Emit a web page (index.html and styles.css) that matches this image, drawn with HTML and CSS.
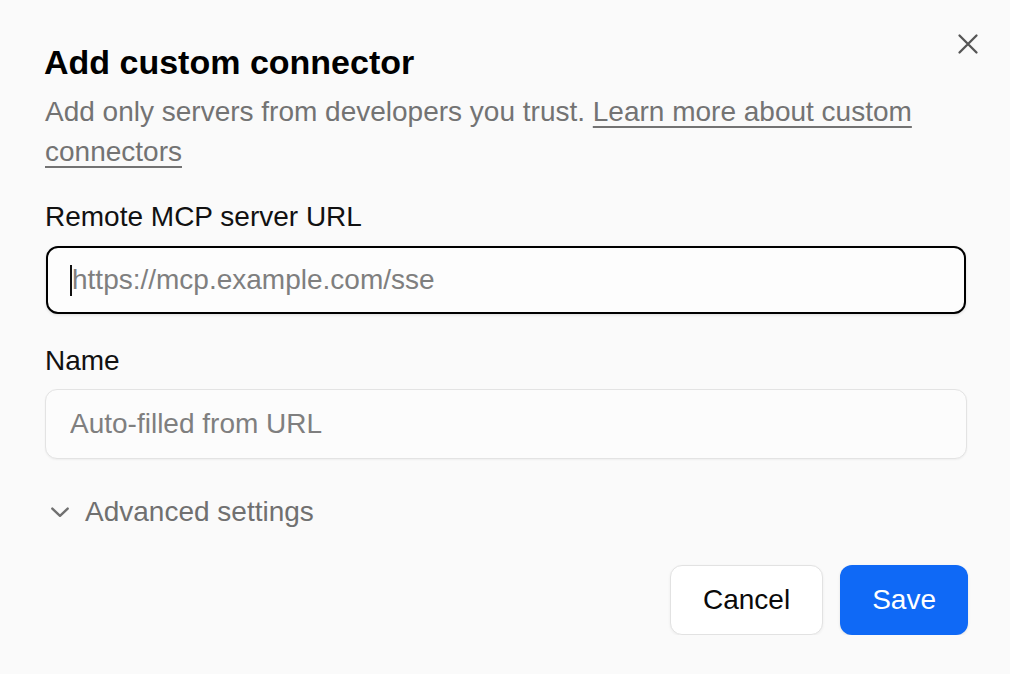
FILE: index.html
```html
<!DOCTYPE html>
<html lang="en">
<head>
<meta charset="utf-8">
<title>Add custom connector</title>
<link rel="stylesheet" href="styles.css">
</head>
<body>
<div class="dialog">
  <button class="close" aria-label="Close">
    <svg width="24" height="24" viewBox="0 0 24 24" fill="none" stroke="#555" stroke-width="2.3" stroke-linecap="round"><path d="M3.5 3.5 L20.5 20.5 M20.5 3.5 L3.5 20.5"/></svg>
  </button>
  <h1 class="title">Add custom connector</h1>
  <p class="subtitle">Add only servers from developers you trust. <a href="#" class="link">Learn more about custom connectors</a></p>

  <label class="label">Remote MCP server URL</label>
  <div class="field">
    <input class="input input-focus" type="text" placeholder="https://mcp.example.com/sse">
    <span class="caret"></span>
  </div>

  <label class="label label-name">Name</label>
  <div class="field">
    <input class="input" type="text" placeholder="Auto-filled from URL">
  </div>

  <div class="advanced">
    <svg width="24" height="24" viewBox="0 0 24 24" fill="none" stroke="#707070" stroke-width="2.4" stroke-linecap="round" stroke-linejoin="round"><path d="M4.3 8.6 L12 15.8 L19.7 8.6"/></svg>
    <span>Advanced settings</span>
  </div>

  <div class="actions">
    <button class="btn btn-cancel">Cancel</button>
    <button class="btn btn-save">Save</button>
  </div>
</div>
</body>
</html>
```
FILE: styles.css
```css
html, body {
  margin: 0;
  padding: 0;
  background: #fafafa;
}
body {
  font-family: "Liberation Sans", Arial, Helvetica, sans-serif;
  color: #0a0a0a;
}
.dialog {
  position: relative;
  padding: 42px 43px 0 45px;
  display: flex;
  flex-direction: column;
}
.close {
  position: absolute;
  top: 32px;
  right: 30px;
  width: 24px;
  height: 24px;
  padding: 0;
  border: 0;
  background: transparent;
  display: flex;
}
.title {
  margin: 0 0 10px -1px;
  font-size: 34px;
  line-height: 40px;
  font-weight: 700;
  color: #000;
}
.subtitle {
  margin: 0;
  font-size: 28px;
  line-height: 40px;
  color: #737373;
}
.link {
  color: #737373;
  text-decoration: underline;
  text-decoration-thickness: 2px;
  text-underline-offset: 5px;
}
.label {
  margin-top: 25px;
  margin-bottom: 8px;
  font-size: 28px;
  line-height: 40px;
  color: #111;
}
.label-name {
  margin-top: 26px;
}
.field {
  position: relative;
  height: 70px;
  display: flex;
}
.input {
  flex: 1;
  box-sizing: border-box;
  height: 70px;
  margin: 0;
  padding: 0 24px;
  border: 1px solid #e3e3e3;
  border-radius: 12px;
  background: #fcfcfc;
  font-family: inherit;
  font-size: 28px;
  color: #111;
  box-shadow: 0 1px 2px rgba(0, 0, 0, 0.05);
  outline: none;
}
.input::placeholder {
  color: #7f7f7f;
}
.input-focus {
  height: 68px;
  margin: 1px 1px;
  border: 2px solid #000;
  background: #fdfdfd;
  box-shadow: 0 1px 3px rgba(0, 0, 0, 0.12);
}
.caret {
  position: absolute;
  left: 25px;
  top: 20px;
  width: 2px;
  height: 31px;
  background: #111;
}
.advanced {
  margin-top: 33px;
  display: flex;
  align-items: center;
  gap: 13px;
  padding-left: 3px;
  font-size: 28px;
  line-height: 40px;
  color: #707070;
}
.advanced svg {
  flex: none;
}
.actions {
  margin-top: 33px;
  display: flex;
  justify-content: flex-end;
  gap: 17px;
  margin-right: -1px;
}
.btn {
  box-sizing: border-box;
  height: 70px;
  padding: 0 32px;
  border-radius: 12px;
  font-family: inherit;
  font-size: 28px;
  cursor: pointer;
}
.btn-cancel {
  background: #ffffff;
  color: #0a0a0a;
  border: 1.5px solid #e2e2e2;
  box-shadow: 0 1px 3px rgba(0, 0, 0, 0.06);
}
.btn-save {
  background: #0f69f6;
  color: #ffffff;
  border: 0;
  box-shadow: 0 1px 3px rgba(0, 0, 0, 0.1);
}
```
